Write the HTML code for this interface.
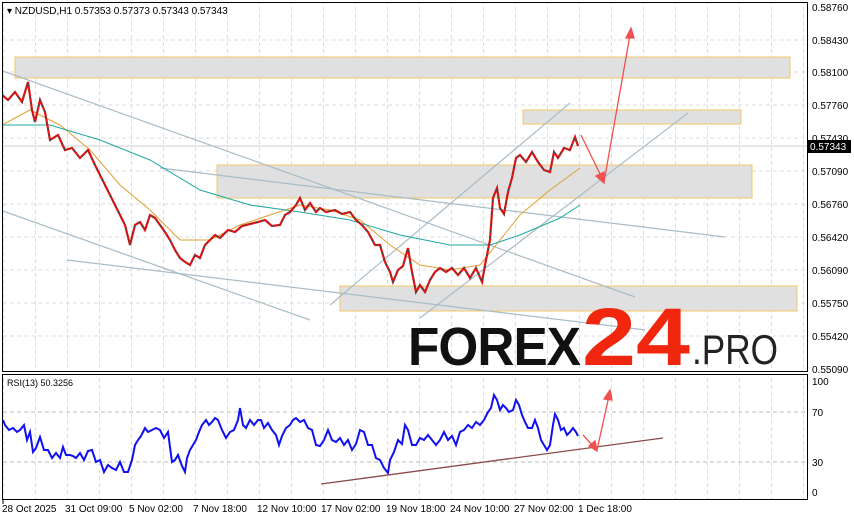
<!DOCTYPE html>
<html><head><meta charset="utf-8"><style>
body{margin:0;background:#fff;width:854px;height:520px;overflow:hidden;font-family:"Liberation Sans",sans-serif}
svg text{font-family:"Liberation Sans",sans-serif}
</style></head><body>
<svg width="854" height="520" viewBox="0 0 854 520" xmlns="http://www.w3.org/2000/svg">
<defs>
<pattern id="vg" x="3" y="0" width="32" height="520" patternUnits="userSpaceOnUse"><line x1="0.5" y1="0" x2="0.5" y2="520" stroke="#ddd" stroke-dasharray="4,3"/></pattern>
<clipPath id="mc"><rect x="3" y="3" width="804" height="368"/></clipPath>
</defs>
<rect x="3" y="3" width="804" height="368" fill="url(#vg)"/>
<rect x="3" y="375" width="804" height="124" fill="url(#vg)"/>
<g stroke="#ddd" stroke-dasharray="4,3">
<line x1="3" x2="807" y1="40" y2="40"/><line x1="3" x2="807" y1="72" y2="72"/><line x1="3" x2="807" y1="105" y2="105"/><line x1="3" x2="807" y1="138" y2="138"/><line x1="3" x2="807" y1="171" y2="171"/><line x1="3" x2="807" y1="204" y2="204"/><line x1="3" x2="807" y1="237" y2="237"/><line x1="3" x2="807" y1="270" y2="270"/><line x1="3" x2="807" y1="303" y2="303"/><line x1="3" x2="807" y1="336" y2="336"/>
<line x1="3" x2="807" y1="412" y2="412" stroke="#bbb"/><line x1="3" x2="807" y1="462" y2="462" stroke="#bbb"/>
</g>
<line x1="3" x2="807" y1="146" y2="146" stroke="#ccc"/>
<g clip-path="url(#mc)">
<rect x="15" y="57" width="775" height="21" fill="#e0e0e0" stroke="#f3c66a"/>
<rect x="523" y="110" width="218" height="14" fill="#e0e0e0" stroke="#f3c66a"/>
<rect x="217" y="165" width="535" height="33" fill="#e0e0e0" stroke="#f3c66a"/>
<rect x="340" y="286" width="457" height="25" fill="#e0e0e0" stroke="#f3c66a"/>
<g stroke="#a9bcc8" stroke-width="1.2" fill="none">
<line x1="0" y1="70" x2="635" y2="297"/>
<line x1="0" y1="210" x2="310" y2="320"/>
<line x1="67" y1="260" x2="645" y2="330"/>
<line x1="160" y1="168" x2="725" y2="237"/>
<line x1="330" y1="305" x2="570" y2="103"/>
<line x1="420" y1="318" x2="688" y2="113"/>
</g>
<polyline fill="none" stroke="#e0a030" stroke-width="1" points="2,125 30,110 60,125 90,150 120,185 150,210 180,240 210,240 240,225 270,215 300,205 330,210 360,220 390,245 420,265 450,270 480,265 500,240 520,215 550,190 580,168"/>
<polyline fill="none" stroke="#20a8a0" stroke-width="1" points="2,125 50,125 100,140 150,160 200,190 250,205 300,212 350,220 400,235 450,245 490,245 520,235 560,218 580,205"/>
<polyline fill="none" stroke="#e81010" stroke-width="2.2" points="2,95 8,100 15,92 22,102 28,82 32,110 35,122 40,100 45,112 50,140 58,135 65,150 72,148 80,158 88,150 95,165 100,175 105,185 110,195 115,205 120,215 125,225 130,245 135,225 140,222 145,230 150,215 155,218 160,225 165,232 170,240 175,250 180,258 185,262 190,265 195,255 200,258 205,245 210,240 215,235 220,238 228,230 235,232 242,226 250,224 258,222 265,220 272,226 280,225 285,215 290,212 296,205 300,198 305,210 310,203 316,212 320,208 326,212 335,210 342,214 350,212 356,220 362,225 368,232 375,245 380,245 385,262 390,272 393,282 398,270 403,266 408,248 412,272 416,292 420,285 425,292 430,280 435,272 440,268 446,272 452,268 458,275 464,268 470,278 476,268 482,282 486,260 490,240 493,198 497,188 500,208 504,214 508,192 512,178 516,158 520,155 526,162 532,152 538,162 544,170 550,172 554,152 558,158 564,148 570,150 575,137 578,146"/>
<polyline fill="none" stroke="#2f4f4f" stroke-width="1.4" stroke-dasharray="2,4" points="2,95 8,100 15,92 22,102 28,82 32,110 35,122 40,100 45,112 50,140 58,135 65,150 72,148 80,158 88,150 95,165 100,175 105,185 110,195 115,205 120,215 125,225 130,245 135,225 140,222 145,230 150,215 155,218 160,225 165,232 170,240 175,250 180,258 185,262 190,265 195,255 200,258 205,245 210,240 215,235 220,238 228,230 235,232 242,226 250,224 258,222 265,220 272,226 280,225 285,215 290,212 296,205 300,198 305,210 310,203 316,212 320,208 326,212 335,210 342,214 350,212 356,220 362,225 368,232 375,245 380,245 385,262 390,272 393,282 398,270 403,266 408,248 412,272 416,292 420,285 425,292 430,280 435,272 440,268 446,272 452,268 458,275 464,268 470,278 476,268 482,282 486,260 490,240 493,198 497,188 500,208 504,214 508,192 512,178 516,158 520,155 526,162 532,152 538,162 544,170 550,172 554,152 558,158 564,148 570,150 575,137 578,146"/>
<g stroke="#f05050" stroke-width="1.3" fill="#f05050">
<line x1="581" y1="135" x2="602" y2="178"/><polygon points="604,183 596,176 604,172"/>
<line x1="604" y1="182" x2="630" y2="35"/><polygon points="631,28 626,38 634,38"/>
</g>
</g>
<text x="7" y="14" font-size="10" fill="#000">▾ NZDUSD,H1  0.57353 0.57373 0.57343 0.57343</text>
<text x="408" y="365" font-size="54" font-weight="900" fill="#111" letter-spacing="-1" textLength="172" lengthAdjust="spacingAndGlyphs">FOREX</text>
<text x="582" y="365" font-size="82" font-weight="700" fill="#f0260f" textLength="108" lengthAdjust="spacingAndGlyphs">24</text>
<text x="692" y="364" font-size="42" fill="#222" textLength="86" lengthAdjust="spacingAndGlyphs">.PRO</text>
<rect x="2.5" y="2.5" width="805" height="369" fill="none" stroke="#000"/>
<rect x="2.5" y="374.5" width="805" height="125" fill="none" stroke="#000"/>
<g font-size="10" fill="#000">
<text x="812" y="11">0.58760</text><text x="812" y="44">0.58430</text><text x="812" y="76">0.58100</text><text x="812" y="109">0.57760</text><text x="812" y="142">0.57430</text><text x="812" y="175">0.57090</text><text x="812" y="208">0.56760</text><text x="812" y="241">0.56420</text><text x="812" y="274">0.56090</text><text x="812" y="307">0.55750</text><text x="812" y="340">0.55420</text><text x="812" y="373">0.55090</text>
<text x="812" y="385">100</text><text x="812" y="416">70</text><text x="812" y="466">30</text><text x="812" y="496">0</text>
</g>
<rect x="808" y="140" width="43" height="13" fill="#000"/>
<text x="810" y="150" font-size="10" fill="#fff">0.57343</text>
<text x="7" y="386" font-size="9" fill="#000">RSI(13) 50.3256</text>
<polyline fill="none" stroke="#1010f0" stroke-width="2" points="3,420 5,425 9,430 13,428 17,432 20,430 24,425 27,440 30,432 33,452 36,448 40,437 44,450 48,450 52,458 56,453 60,458 63,447 66,455 70,455 73,456 76,458 80,453 84,460 88,451 92,450 96,462 100,460 104,472 108,465 112,468 116,470 120,462 124,472 128,472 132,460 135,445 138,440 141,436 145,428 148,432 152,430 156,428 160,430 164,438 168,432 172,462 175,460 178,455 182,466 185,472 187,458 190,450 193,445 196,440 199,432 202,425 206,420 209,425 212,422 215,418 218,420 222,430 226,438 230,432 234,430 238,420 240,408 243,425 246,428 250,420 254,425 258,420 261,420 264,428 268,423 272,430 276,435 279,445 282,436 286,428 290,425 293,420 296,418 300,422 304,420 308,428 312,430 316,445 320,446 324,440 328,430 332,440 336,442 340,438 344,445 348,440 352,450 356,444 360,430 364,432 368,445 372,445 376,458 380,460 384,468 388,473 390,460 394,452 398,440 402,444 405,425 408,430 412,445 416,445 420,438 424,440 428,435 432,440 436,445 440,440 444,432 448,440 452,436 456,445 460,432 464,430 468,425 472,428 476,422 480,425 484,420 488,412 491,408 494,395 497,400 500,410 503,405 506,408 509,412 513,410 516,400 519,405 522,415 525,422 528,428 532,428 535,420 538,428 541,440 544,445 547,450 550,445 553,425 555,414 558,420 561,430 564,428 567,435 570,432 573,428 576,432 578,436"/>
<line x1="321" y1="484" x2="663" y2="438" stroke="#8b4a4a" stroke-width="1.3"/>
<g stroke="#f05050" stroke-width="1.3" fill="#f05050">
<line x1="583" y1="435" x2="594" y2="447"/><polygon points="597,451 589,446 595,441"/>
<line x1="597" y1="450" x2="609" y2="396"/><polygon points="610,390 604,399 612,400"/>
</g>
<g font-size="10" fill="#000">
<line x1="3" y1="499" x2="3" y2="504" stroke="#000"/>
<text x="2" y="512">28 Oct 2025</text><text x="65" y="512">31 Oct 09:00</text><text x="129" y="512">5 Nov 02:00</text><text x="193" y="512">7 Nov 18:00</text><text x="257" y="512">12 Nov 10:00</text><text x="321" y="512">17 Nov 02:00</text><text x="386" y="512">19 Nov 18:00</text><text x="450" y="512">24 Nov 10:00</text><text x="514" y="512">27 Nov 02:00</text><text x="578" y="512">1 Dec 18:00</text>
</g>
</svg>
</body></html>
